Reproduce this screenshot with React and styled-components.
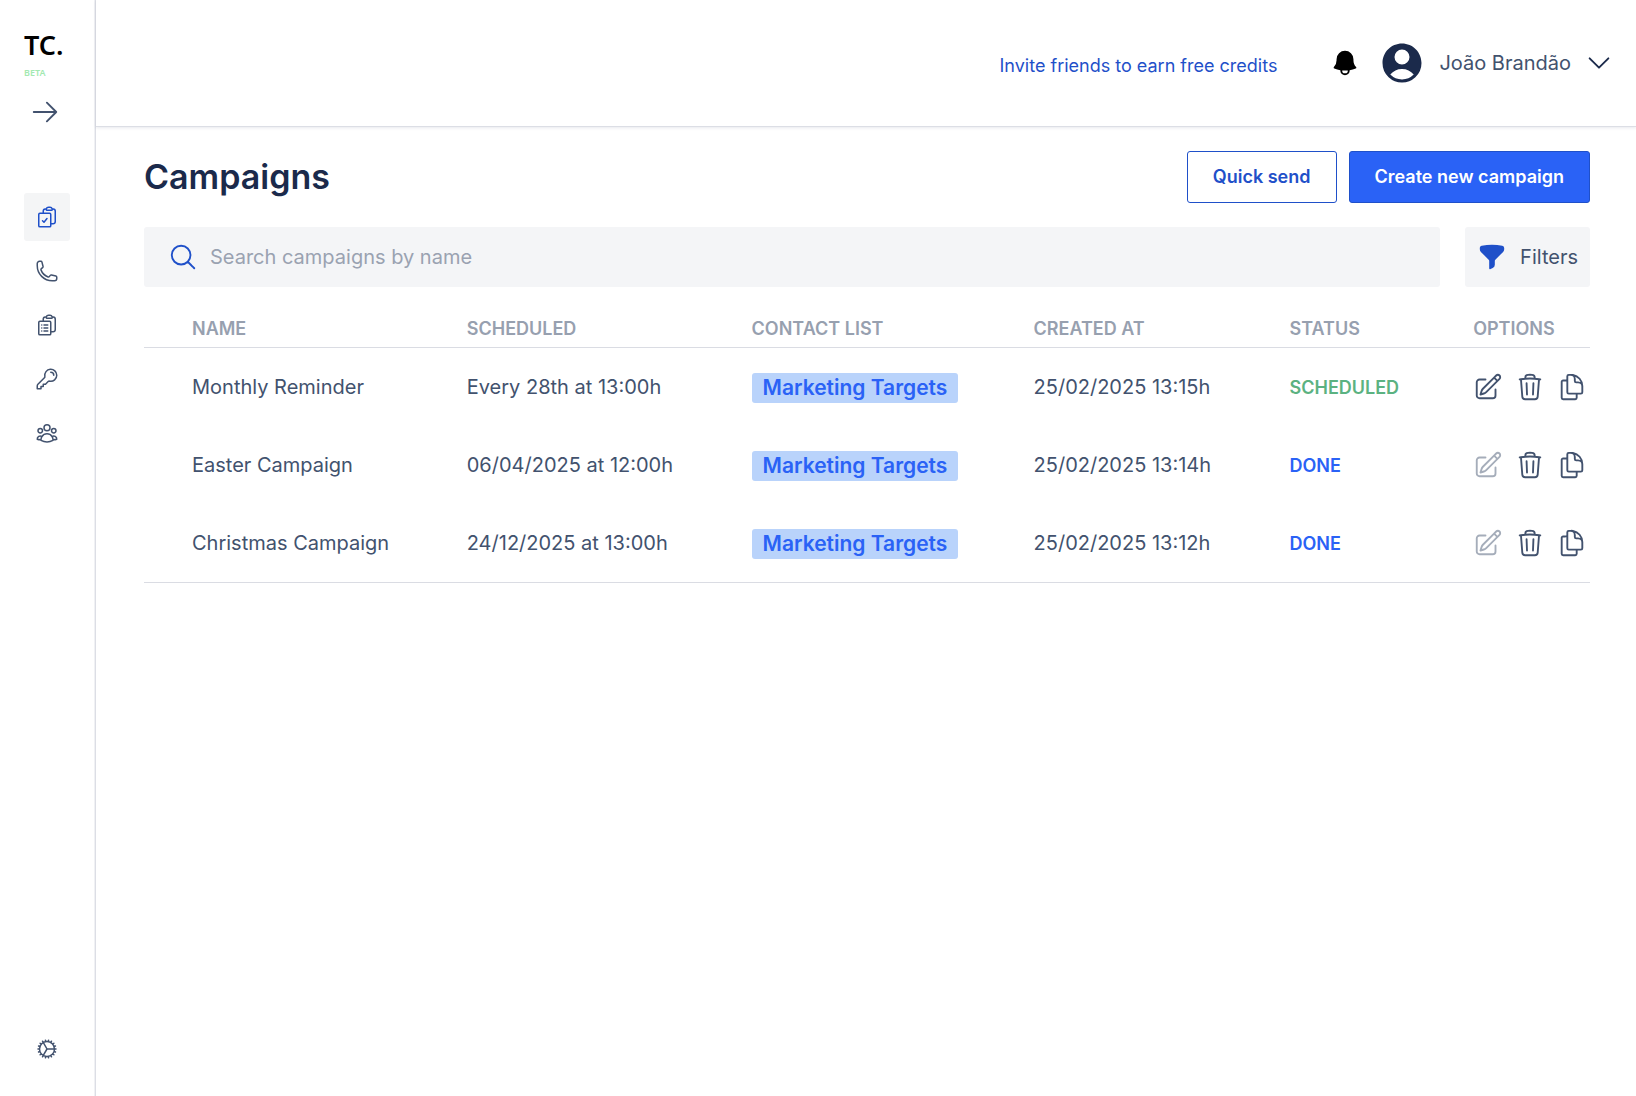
import React from 'react';
import styled, { createGlobalStyle } from 'styled-components';
import {
    HiBell,
    HiFunnel,
    HiOutlineArrowRight,
    HiOutlineChevronDown,
    HiOutlineClipboardDocumentCheck,
    HiOutlineClipboardDocumentList,
    HiOutlineCog,
    HiOutlineDocumentDuplicate,
    HiOutlineKey,
    HiOutlineMagnifyingGlass,
    HiOutlinePencilSquare,
    HiOutlinePhone,
    HiOutlineTrash,
    HiOutlineUserGroup,
    HiUserCircle
} from 'react-icons/hi2';


const GlobalStyle = createGlobalStyle`
    * {
        box-sizing: border-box;
    }

    body {
        margin: 0;
        background: #ffffff;
        color: #42526e;
        font-family: Inter, 'Liberation Sans', sans-serif;
        font-size: 20px;
        line-height: 30px;
    }

    button, input {
        font: inherit;
        color: inherit;
    }

    button {
        cursor: pointer;
    }

    svg {
        display: block;
        flex-shrink: 0;
    }
`;

const Page = styled.div`
    display: flex;
    min-height: 100vh;
`;

const Sidebar = styled.aside`
    display: flex;
    flex-direction: column;
    flex-shrink: 0;
    width: 96px;
    padding: 27px 25px 23px 24px;
    border-right: 1px solid #dcdee5;
    box-shadow: inset -1px 0 0 #f0f1f4;
`;

const Logo = styled.a`
    color: #000000;
    font-family: 'Noto Sans', sans-serif;
    font-size: 27px;
    font-weight: 600;
    line-height: 36px;
    text-decoration: none;
`;

const Beta = styled.span`
    color: #a3e9b1;
    font-family: 'Noto Sans', sans-serif;
    font-size: 9px;
    font-weight: 600;
    line-height: 20px;
`;

const ExpandButton = styled.button`
    display: flex;
    align-self: flex-start;
    margin: 14px 0 66px;
    padding: 0 6px;
    border: 0;
    background: none;
`;

const Nav = styled.nav`
    display: flex;
    flex-direction: column;
    flex-grow: 1;
    gap: 6px;
`;

const NavLink = styled.a`
    display: flex;
    align-items: center;
    justify-content: center;
    height: 48px;
    border-radius: 3px;
    color: ${({$active}) => $active ? '#1f50c9' : '#42526e'};
    background: ${({$active}) => $active ? '#f4f5f6' : 'transparent'};

    &:last-child {
        margin-top: auto;
    }
`;

const Content = styled.div`
    flex-grow: 1;
    min-width: 0;
`;

const Header = styled.header`
    display: flex;
    align-items: center;
    justify-content: flex-end;
    height: 127px;
    padding-right: 22px;
    border-bottom: 1px solid #dcdee5;
    box-shadow: 0 1px 3px rgba(27,42,75,0.1);
`;

const InviteLink = styled.a`
    margin: 5px 53px 0 0;
    color: #1f50c9;
    font-size: 18px;
    text-decoration: none;
`;

const BellButton = styled.button`
    display: flex;
    margin-right: 18px;
    padding: 0;
    border: 0;
    background: none;
    color: #000000;
`;

const UserButton = styled.button`
    display: flex;
    align-items: center;
    gap: 13px;
    padding: 0;
    border: 0;
    background: none;

    svg {
        color: #1b2a4b;
    }
`;

const Main = styled.main`
    padding: 24px 46px 0 48px;
`;

const TitleBar = styled.div`
    display: flex;
    align-items: center;
    gap: 12px;
    margin-bottom: 24px;
`;

const Title = styled.h1`
    margin: 0 auto 0 0;
    color: #1b2a4b;
    font-size: 34px;
    font-weight: 600;
    line-height: 52px;
`;

const Button = styled.button`
    height: 52px;
    padding: 0 25px;
    border: 1px solid #1f50c9;
    border-radius: 3px;
    color: ${({$primary}) => $primary ? '#ffffff' : '#1f50c9'};
    background: ${({$primary}) => $primary ? '#2a62f6' : '#ffffff'};
    font-size: 18px;
    font-weight: 600;
`;

const SearchBar = styled.div`
    display: flex;
    gap: 25px;
    margin-bottom: 24px;
`;

const SearchField = styled.label`
    display: flex;
    flex-grow: 1;
    align-items: center;
    gap: 12px;
    height: 60px;
    padding: 0 24px;
    border-radius: 3px;
    background: #f4f5f7;

    svg {
        color: #1f50c9;
    }
`;

const SearchInput = styled.input`
    flex-grow: 1;
    min-width: 0;
    padding: 0;
    border: 0;
    outline: none;
    background: none;

    &::placeholder {
        color: #9aa2b1;
        opacity: 1;
    }
`;

const FiltersButton = styled.button`
    display: flex;
    align-items: center;
    gap: 13px;
    height: 60px;
    padding: 0 12px;
    border: 0;
    border-radius: 3px;
    background: #f4f5f7;

    svg {
        color: #1f50c9;
    }
`;

const Table = styled.table`
    width: 100%;
    border-spacing: 0;
    table-layout: fixed;
    white-space: nowrap;

    tbody tr:last-child td {
        height: 79px;
        border-bottom: 1px solid #dadce3;
    }
`;

const Col = styled.col`
    width: ${({$share}) => $share}%;
`;

const HeadCell = styled.th`
    height: 37px;
    padding: 0 0 0 48px;
    border-bottom: 1px solid #dadce3;
    color: #97a0af;
    font-size: 18px;
    font-weight: 600;
    line-height: 34px;
    text-align: left;
`;

const Cell = styled.td`
    height: 78px;
    padding: 0 0 0 48px;
`;

const Tag = styled.span`
    display: inline-block;
    padding: 0 11px;
    border-radius: 3px;
    color: #2a62f6;
    background: #b9d3fb;
    font-size: 21px;
    font-weight: 600;
    vertical-align: middle;
`;

const Status = styled.span`
    color: ${({$done}) => $done ? '#2a62f6' : '#5bb281'};
    font-size: 18px;
    font-weight: 600;
`;

const Options = styled.div`
    display: flex;
    gap: 12px;
`;

const OptionButton = styled.button`
    display: flex;
    padding: 0;
    border: 0;
    background: none;

    &:disabled {
        color: #a5adba;
        cursor: default;
    }
`;

const navItems = [
    { label: 'Campaigns', Icon: HiOutlineClipboardDocumentCheck, active: true },
    { label: 'Calls', Icon: HiOutlinePhone },
    { label: 'Lists', Icon: HiOutlineClipboardDocumentList },
    { label: 'API keys', Icon: HiOutlineKey },
    { label: 'Contacts', Icon: HiOutlineUserGroup },
    { label: 'Settings', Icon: HiOutlineCog }
];

const columns = [
    { title: 'NAME', share: 19 },
    { title: 'SCHEDULED', share: 19.7 },
    { title: 'CONTACT LIST', share: 19.5 },
    { title: 'CREATED AT', share: 17.7 },
    { title: 'STATUS', share: 12.7 },
    { title: 'OPTIONS', share: 11.4 }
];

const campaigns = [
    {
        name: 'Monthly Reminder',
        scheduled: 'Every 28th at 13:00h',
        list: 'Marketing Targets',
        createdAt: '25/02/2025 13:15h',
        status: 'SCHEDULED'
    },
    {
        name: 'Easter Campaign',
        scheduled: '06/04/2025 at 12:00h',
        list: 'Marketing Targets',
        createdAt: '25/02/2025 13:14h',
        status: 'DONE'
    },
    {
        name: 'Christmas Campaign',
        scheduled: '24/12/2025 at 13:00h',
        list: 'Marketing Targets',
        createdAt: '25/02/2025 13:12h',
        status: 'DONE'
    }
];

const CampaignRow = ({ name, scheduled, list, createdAt, status }) => {
    const done = status === 'DONE';

    return (
        <tr>
            <Cell>{name}</Cell>
            <Cell>{scheduled}</Cell>
            <Cell><Tag>{list}</Tag></Cell>
            <Cell>{createdAt}</Cell>
            <Cell><Status $done={done}>{status}</Status></Cell>
            <Cell>
                <Options>
                    <OptionButton aria-label={`Edit ${name}`} disabled={done}><HiOutlinePencilSquare size={30}/></OptionButton>
                    <OptionButton aria-label={`Delete ${name}`}><HiOutlineTrash size={30}/></OptionButton>
                    <OptionButton aria-label={`Duplicate ${name}`}><HiOutlineDocumentDuplicate size={30}/></OptionButton>
                </Options>
            </Cell>
        </tr>
    );
};

const App = () => (
    <Page>
        <GlobalStyle/>
        <Sidebar>
            <Logo href='#'>TC.</Logo>
            <Beta>BETA</Beta>
            <ExpandButton aria-label='Expand menu'><HiOutlineArrowRight size={30}/></ExpandButton>
            <Nav>
                {
                    navItems.map(({ label, Icon, active }) => (
                        <NavLink href='#' key={label} aria-label={label} $active={active}>
                            <Icon size={24}/>
                        </NavLink>
                    ))
                }
            </Nav>
        </Sidebar>
        <Content>
            <Header>
                <InviteLink href='#'>Invite friends to earn free credits</InviteLink>
                <BellButton aria-label='Notifications'><HiBell size={30}/></BellButton>
                <UserButton>
                    <HiUserCircle size={48}/>
                    João Brandão
                    <HiOutlineChevronDown size={30}/>
                </UserButton>
            </Header>
            <Main>
                <TitleBar>
                    <Title>Campaigns</Title>
                    <Button>Quick send</Button>
                    <Button $primary>Create new campaign</Button>
                </TitleBar>
                <SearchBar>
                    <SearchField>
                        <HiOutlineMagnifyingGlass size={30}/>
                        <SearchInput type='text' aria-label='Search campaigns' placeholder='Search campaigns by name'/>
                    </SearchField>
                    <FiltersButton>
                        <HiFunnel size={30}/>
                        Filters
                    </FiltersButton>
                </SearchBar>
                <Table>
                    <colgroup>
                        {columns.map(({ title, share }) => <Col key={title} $share={share}/>)}
                    </colgroup>
                    <thead>
                        <tr>
                            {columns.map(({ title }) => <HeadCell key={title}>{title}</HeadCell>)}
                        </tr>
                    </thead>
                    <tbody>
                        {campaigns.map((d) => <CampaignRow key={d.name} {...d}/>)}
                    </tbody>
                </Table>
            </Main>
        </Content>
    </Page>
);

export default App;
